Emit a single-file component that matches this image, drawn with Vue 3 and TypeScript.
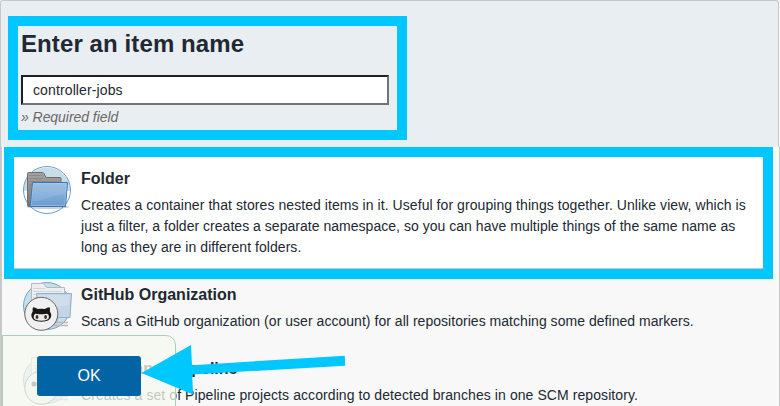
<script setup lang="ts">
import { ref } from 'vue'

interface ItemType {
  id: string
  title: string
  lines: string[]
  selected?: boolean
}

const itemName = ref('controller-jobs')

const itemTypes: ItemType[] = [
  {
    id: 'folder',
    title: 'Folder',
    selected: true,
    lines: [
      'Creates a container that stores nested items in it. Useful for grouping things together. Unlike view, which is',
      'just a filter, a folder creates a separate namespace, so you can have multiple things of the same name as',
      'long as they are in different folders.',
    ],
  },
  {
    id: 'github',
    title: 'GitHub Organization',
    lines: ['Scans a GitHub organization (or user account) for all repositories matching some defined markers.'],
  },
  {
    id: 'multibranch',
    title: 'Multibranch Pipeline',
    lines: ['Creates a set of Pipeline projects according to detected branches in one SCM repository.'],
  },
]
</script>

<template>
  <main class="page">
    <header class="name-panel">
      <label class="heading" for="name">Enter an item name</label>
      <input id="name" v-model="itemName" class="name-input" type="text" />
      <p class="hint">» Required field</p>
    </header>
    <ul class="types">
      <li v-for="item in itemTypes" :key="item.id" class="type" :class="{ selected: item.selected }">
        <svg v-if="item.id === 'folder'" class="icon" viewBox="0 0 48 48">
          <defs>
            <linearGradient id="blueFolder" x1="0" y1="0" x2="0" y2="1">
              <stop offset="0" stop-color="#94b9de" />
              <stop offset="1" stop-color="#6a9dd2" />
            </linearGradient>
            <linearGradient id="greyFolder" x1="0" y1="0" x2="0" y2="1">
              <stop offset="0" stop-color="#a3a3a3" />
              <stop offset="1" stop-color="#747474" />
            </linearGradient>
          </defs>
          <circle cx="24" cy="24" r="23.5" fill="#fff" />
          <path d="M.5 25a23.500 23.500 0 0 1 47 0z" fill="#c7dde7" />
          <circle cx="24" cy="24" r="23.5" fill="none" stroke="#6c9fca" />
          <ellipse cx="25" cy="41" rx="21" ry="2" fill="#777" opacity=".35" />
          <path d="M4.500 7.500q0-1 1-1h14q1 0 1.500 1l2 4h14q1 0 1 1V40.500H5.500q-1 0-1-1z" fill="url(#greyFolder)" stroke="#6c6c6c" />
          <path d="M6 9.500h13M6 12.500h14M6 15.500h30M6 18.500h4M6 21.500h4M6 24.500h4M6 27.500h4M6 30.500h3M6 33.500h3" stroke="#8a8a8a" />
          <path d="M9.500 16.500h35l-2 24H7.200z" fill="url(#blueFolder)" stroke="#3d74b5" stroke-linejoin="round" />
          <path d="M10.500 17.500h32.800l-.8 11c-15 0-20 6-32.500 7z" fill="#fff" opacity=".1" />
          <path d="M10.500 17.500h33l-1.900 22H8.300z" fill="none" stroke="#b9d5ee" opacity=".45" />
        </svg>
        <svg v-else class="icon" viewBox="0 0 48 48">
          <circle cx="24" cy="24" r="23.500" fill="#c7dfea" stroke="#70a5ce" />
          <path d="M8.500 1.500h12l3 4h18v27h-33z" fill="#eceeef" stroke="#b5babc" />
          <path d="M10 6.500h12M10 9.500h29M10 12.500h29M10 15.500h10" stroke="#d2d6d7" />
          <path d="M34 35v5M25 40.500h20M25 43.500h20" stroke="#b4b8ba" stroke-width="1.500" />
          <path d="M13.500 11.500h35l-1.500 24h-31z" fill="#c5d5e5" stroke="#8db1d1" />
          <path d="M15 13h32l-1 10c-10 1-18 4-30 4z" fill="#fff" opacity=".2" />
          <circle cx="18.300" cy="31.800" r="16.500" fill="#f0f0f0" stroke="#686868" />
          <g v-if="item.id === 'github'">
            <path d="M10 25.200q2.500.2 4.700 1.800 3.600-.7 7.200 0 2.200-1.600 4.700-1.800.9 2.300.3 4.300 1.500 2 1.300 4.500-.4 5.700-9.900 5.700t-9.900-5.700q-.2-2.500 1.300-4.500-.6-2 .3-4.300z" fill="#171717" />
            <path d="M12.600 31.800q2.800.6 5.700.4 2.900.2 5.700-.4 2 .6 2 3.200-.2 3.800-7.700 3.800t-7.700-3.800q0-2.600 2-3.200z" fill="#eee9e5" />
            <ellipse cx="14" cy="35" rx="1.400" ry="2" fill="#333" />
            <ellipse cx="22.600" cy="35" rx="1.400" ry="2" fill="#333" />
          </g>
          <circle v-else cx="11" cy="28" r="2.500" fill="#333" />
        </svg>
        <div class="copy">
          <h2 class="title">{{ item.title }}</h2>
          <p v-for="(line, i) in item.lines" :key="line" class="line" :class="`${item.id}-${i}`">{{ line }}</p>
        </div>
      </li>
    </ul>
    <div class="actions">
      <button class="ok" type="button">OK</button>
    </div>
    <div class="frame name-frame"></div>
    <div class="frame type-frame"></div>
    <svg class="arrow" viewBox="0 0 780 406">
      <path d="M141.500 373L191 345l1 20.200L344.800 355.700l.4 10L192.200 374.500l.8 20z" fill="#00c8ff" />
    </svg>
  </main>
</template>

<style>
body {
  background: #f8f8f8;
}
</style>

<style scoped>
.page {
  position: relative;
  box-sizing: border-box;
  width: 780px;
  height: 406px;
  overflow: hidden;
  color: #212831;
  background: #f8f8f8;
  font-family: "Liberation Sans", Arial, sans-serif;
}
.name-panel {
  box-sizing: border-box;
  width: 779px;
  height: 147px;
  padding: 28px 20px 0;
  border: 1px solid #c8c8c8;
  border-bottom: 0;
  border-radius: 3px 3px 0 0;
  background: #e9eef2;
}
.heading {
  display: block;
  height: 30px;
  font-size: 24px;
  line-height: 30px;
  font-weight: 700;
  letter-spacing: 0.1px;
  white-space: nowrap;
}
.name-input {
  display: block;
  box-sizing: border-box;
  width: 368px;
  height: 30px;
  margin-top: 16px;
  padding: 0 10px;
  border: 2px solid;
  border-color: #202020 #747474 #747474 #202020;
  outline: 0;
  background: #fff;
  color: #212831;
  font: 14px "Liberation Sans", Arial, sans-serif;
  letter-spacing: 0.12px;
}
.hint {
  margin: 2px 0 0;
  color: #696969;
  font-size: 14px;
  line-height: 21px;
  font-style: italic;
  letter-spacing: -0.05px;
}
.types {
  box-sizing: border-box;
  height: 259px;
  margin: 0;
  padding: 6px 0 0;
  list-style: none;
  border-left: 2px solid #c8c8c8;
  border-right: 1px solid #c8c8c8;
}
.type {
  display: flex;
  box-sizing: border-box;
  height: 74px;
  padding: 13px 0 0 21px;
  gap: 10px;
}
.type.selected {
  height: 116px;
  margin: 0 12px;
  padding-left: 9px;
  border-bottom: 1px solid #c8c8c8;
  background: #fff;
}
.icon {
  flex: none;
  width: 48px;
  height: 48px;
  overflow: visible;
}
.copy {
  white-space: nowrap;
}
.title {
  margin: 2px 0 5px;
  font-size: 16px;
  line-height: 22px;
}
.line {
  margin: 0;
  font-size: 14px;
  line-height: 21px;
}
.folder-0 {
  letter-spacing: 0.066px;
}
.folder-1 {
  letter-spacing: 0.028px;
}
.folder-2 {
  letter-spacing: 0.05px;
}
.github-0 {
  letter-spacing: 0.036px;
}
.multibranch-0 {
  letter-spacing: 0.08px;
}
.actions {
  position: absolute;
  left: 2px;
  top: 335px;
  box-sizing: border-box;
  width: 174px;
  height: 80px;
  padding: 20px 0 0 34px;
  border: 1px solid #a9cfbb;
  border-radius: 0 10px 0 0;
  background: rgba(245, 249, 239, 0.75);
}
.ok {
  display: block;
  width: 104px;
  height: 40px;
  padding: 0;
  border: 0;
  border-radius: 3px;
  background: #0264a4;
  color: #fff;
  font: 16px "Liberation Sans", Arial, sans-serif;
}
.frame {
  position: absolute;
  box-sizing: border-box;
  border: 10px solid #00c8ff;
}
.name-frame {
  left: 8px;
  top: 16px;
  width: 399px;
  height: 124px;
}
.type-frame {
  left: 4px;
  top: 147px;
  width: 769px;
  height: 132px;
}
.arrow {
  position: absolute;
  left: 0;
  top: 0;
  width: 780px;
  height: 406px;
}
</style>
